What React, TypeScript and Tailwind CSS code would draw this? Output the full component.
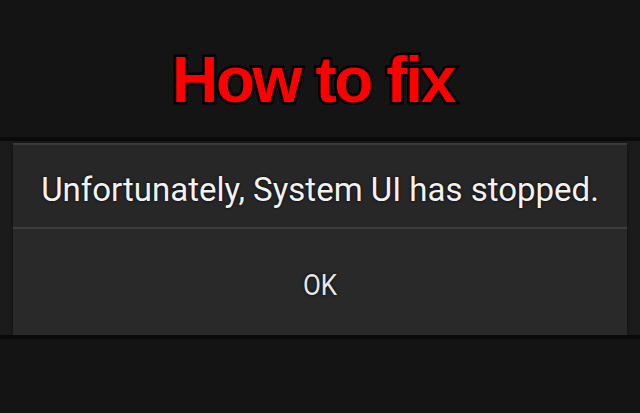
import React from "react";

export default function App() {
  return (
    <div className="w-[640px] h-[413px] bg-[#141414] flex flex-col overflow-hidden">
      <div className="h-[137px] flex items-center justify-center pt-[22px] pr-[14px]">
        <h1
          className="text-[64px] leading-none font-bold text-[#ff0000] tracking-[-2.4px] [paint-order:stroke_fill] [-webkit-text-stroke:5px_#000]"
          style={{ fontFamily: '"Liberation Sans", Arial, sans-serif' }}
        >
          How to fix
        </h1>
      </div>
      <div className="h-[4px] bg-[#0a0a0a]" />
      <div className="h-[194px] bg-[#1b1b1b] flex px-[13px] pt-[2px]">
        <div className="flex-1 flex flex-col bg-[#272727] border-t-2 border-[#3a3a3a] shadow-[0_0_3px_#0e0e0e]">
          <div
            className="h-[82px] flex items-center justify-center text-[33px] leading-none text-[#f2f2f2] [text-shadow:0_0_3px_#000] pt-[6px]"
            style={{ fontFamily: 'Roboto, "Noto Sans", sans-serif' }}
          >
            Unfortunately, System UI has stopped.
          </div>
          <div className="h-[2px] bg-[#3c3c3c]" />
          <div
            className="flex-1 flex items-center justify-center bg-[#292929] pt-[6px]"
            style={{ fontFamily: 'Roboto, "Noto Sans", sans-serif' }}
          >
            <span className="text-[26px] leading-none text-[#e6e6e6] [text-shadow:0_0_3px_#000] scale-y-[1.15]">OK</span>
          </div>
        </div>
      </div>
      <div className="h-[4px] bg-[#0a0a0a]" />
      <div className="flex-1" />
    </div>
  );
}
